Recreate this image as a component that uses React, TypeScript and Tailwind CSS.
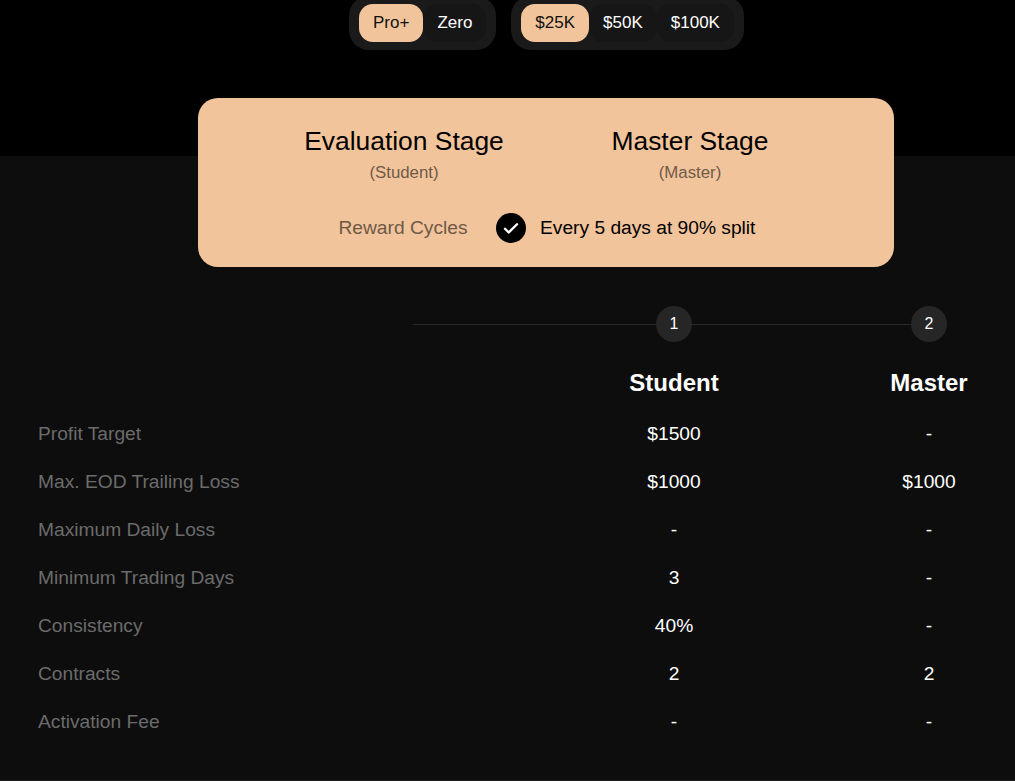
const rows = [
  { label: "Profit Target", student: "$1500", master: "-" },
  { label: "Max. EOD Trailing Loss", student: "$1000", master: "$1000" },
  { label: "Maximum Daily Loss", student: "-", master: "-" },
  { label: "Minimum Trading Days", student: "3", master: "-" },
  { label: "Consistency", student: "40%", master: "-" },
  { label: "Contracts", student: "2", master: "2" },
  { label: "Activation Fee", student: "-", master: "-" },
];

function Tab({ label, active }: { label: string; active?: boolean }) {
  return (
    <div
      className={
        active
          ? "h-[38px] px-[14px] rounded-[14px] bg-[#f2c49b] text-[#111111] flex items-center text-[17px]"
          : "h-[38px] px-[14px] rounded-[14px] bg-[#161616] text-white flex items-center text-[17px]"
      }
    >
      {label}
    </div>
  );
}

export default function App() {
  return (
    <div className="w-[1015px] h-[781px] overflow-hidden bg-[#0d0d0d] border-b border-[#1f1f1f] font-['Liberation_Sans',Arial,sans-serif]">
      {/* top tabs */}
      <section className="h-[156px] bg-black pl-[349px] flex items-start gap-[15px]">
        <div className="-mt-[4px] h-[54px] px-[10px] rounded-[20px] bg-[#1a1a1a] flex items-start pt-[8px]">
          <Tab label="Pro+" active />
          <Tab label="Zero" />
        </div>
        <div className="-mt-[4px] h-[54px] px-[10px] rounded-[20px] bg-[#1a1a1a] flex items-start pt-[8px]">
          <Tab label="$25K" active />
          <Tab label="$50K" />
          <Tab label="$100K" />
        </div>
      </section>

      {/* stage card */}
      <section className="relative -mt-[58px] ml-[198px] w-[696px] h-[169px] rounded-[20px] bg-[#f2c49b] pt-[27px]">
        <div className="flex">
          <div className="ml-[56px] w-[300px] text-center">
            <h2 className="text-[26.4px] leading-[32px] text-black">Evaluation Stage</h2>
            <p className="mt-[6px] text-[16.8px] leading-[20px] text-[#6f5a48]">(Student)</p>
          </div>
          <div className="ml-[16px] w-[240px] text-center">
            <h2 className="text-[26.4px] leading-[32px] text-black">Master Stage</h2>
            <p className="mt-[6px] text-[16.8px] leading-[20px] text-[#6f5a48]">(Master)</p>
          </div>
        </div>
        <div className="mt-[30px] flex items-center">
          <span className="ml-[56px] w-[298px] text-center text-[19.2px] leading-[28px] text-[#6f5a48]">Reward Cycles</span>
          <span className="-ml-[56px] w-[30px] h-[30px] rounded-full bg-black flex items-center justify-center">
            <svg width="18" height="18" viewBox="0 0 24 24" fill="none" stroke="white" strokeWidth="3.2" strokeLinecap="round" strokeLinejoin="round">
              <path d="M4 13l5 5L20 7" />
            </svg>
          </span>
          <span className="ml-[14px] text-[19.2px] leading-[28px] text-black">Every 5 days at 90% split</span>
        </div>
      </section>

      {/* steps */}
      <section className="relative mt-[39px] ml-[413px] h-[36px] w-[534px]">
        <div className="absolute left-0 right-[18px] top-[18px] h-px bg-[#2a2a2a]" />
        <div className="absolute left-[243px] top-0 w-[36px] h-[36px] rounded-full bg-[#262626] text-white text-[16px] flex items-center justify-center">1</div>
        <div className="absolute left-[498px] top-0 w-[36px] h-[36px] rounded-full bg-[#262626] text-white text-[16px] flex items-center justify-center">2</div>
      </section>

      {/* table */}
      <section className="mt-[24px]">
        <div className="flex h-[34px] items-center text-[24px] font-bold text-white">
          <div className="w-[546.5px] shrink-0" />
          <div className="w-[255px] shrink-0 text-center">Student</div>
          <div className="w-[255px] shrink-0 text-center">Master</div>
        </div>
        <div className="mt-[10px]">
          {rows.map((row) => (
            <div key={row.label} className="flex h-[48px] items-center text-[19.2px] text-white">
              <div className="w-[546.5px] shrink-0 pl-[38px] text-[#6b6b6b]">{row.label}</div>
              <div className="w-[255px] shrink-0 text-center">{row.student}</div>
              <div className="w-[255px] shrink-0 text-center">{row.master}</div>
            </div>
          ))}
        </div>
      </section>
    </div>
  );
}
